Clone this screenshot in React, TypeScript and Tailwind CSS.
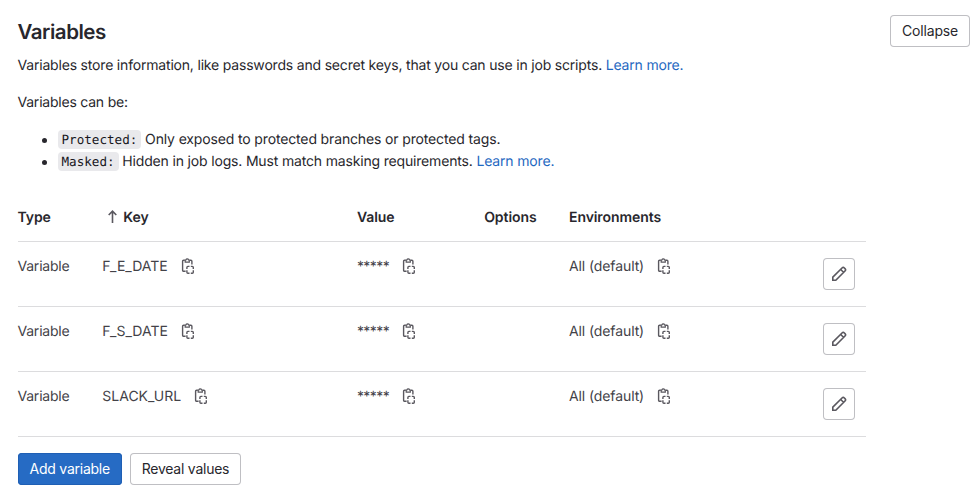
import React from "react";

const COLS = "grid grid-cols-[84.8px_254.6px_127.3px_84.8px_1fr_43px]";

const rows = [{ key: "F_E_DATE" }, { key: "F_S_DATE" }, { key: "SLACK_URL" }];

function CopyIcon() {
  return (
    <svg className="mb-[2px] ml-3 size-4 shrink-0 overflow-visible" viewBox="0 0 16 16" fill="none" stroke="#5a585f" strokeWidth="1.4">
      <path d="M5.6 13.3H3.6a1 1 0 0 1-1-1V3.3a1 1 0 0 1 1-1h1.2M9.7 2.3h1.2a1 1 0 0 1 1 1v3.2" />
      <path d="M5.2 4.2V2h.7a1.4 1.4 0 0 1 2.7 0h.7v2.2z" strokeWidth="1.2" />
      <path d="M6.9 11V9.4a1 1 0 0 1 1-1h1.6M10.8 8.4h1.5a1 1 0 0 1 1 1V11M13.3 12.3v1.9a1 1 0 0 1-1 1h-1.5M9.5 15.2H7.9a1 1 0 0 1-1-1v-1.9" />
    </svg>
  );
}

function PencilIcon() {
  return (
    <svg className="size-4" viewBox="0 0 16 16" fill="none" stroke="#5a585f" strokeWidth="1.6" strokeLinejoin="miter">
      <path d="M1.8 14.2v-3L11 2a1.7 1.7 0 0 1 2.4 0l.6.6a1.7 1.7 0 0 1 0 2.4l-9.2 9.2zM9.7 3.5l2.8 2.8" />
    </svg>
  );
}

function Button({ children, className = "" }: { children: React.ReactNode; className?: string }) {
  return (
    <button
      className={`flex h-8 items-center justify-center rounded-[4px] shadow-[inset_0_0_0_1px_#bfbfc3] ${className}`}
    >
      {children}
    </button>
  );
}

function Code({ children }: { children: React.ReactNode }) {
  return (
    <code className="rounded-[4px] bg-[#e9e9ec] px-[4px] py-[2px] font-['DejaVu_Sans_Mono',monospace] text-[12.6px] tracking-normal text-[#18171d]">
      {children}
    </code>
  );
}

function Bullet({ children }: { children: React.ReactNode }) {
  return (
    <li className="flex h-[22px] items-center">
      <span className="mr-[10.5px] size-[5px] rounded-full bg-[#28272d]" />
      <div>{children}</div>
    </li>
  );
}

export default function App() {
  return (
    <main className="h-[502px] overflow-hidden bg-white pt-[15px] pr-2 pl-[17.5px] font-['Inter',sans-serif] text-sm leading-[22px] text-[#28272d] [text-rendering:geometricPrecision]">
      <header className="flex h-8 items-start justify-between">
        <h2 className="pt-[3px] text-[20.5px] leading-7 font-semibold tracking-[-0.47px]">Variables</h2>
        <Button className="w-20 tracking-[-0.17px]">Collapse</Button>
      </header>
      <p className="mt-2 tracking-[-0.188px]">
        Variables store information, like passwords and secret keys, that you can use in job scripts.{" "}
        <a className="text-[#1f68c1]">Learn more.</a>
      </p>
      <p className="mt-[15px] tracking-[-0.22px]">Variables can be:</p>
      <ul className="mt-[15px] pl-[24.5px] tracking-[-0.145px]">
        <Bullet>
          <Code>Protected:</Code> Only exposed to protected branches or protected tags.
        </Bullet>
        <Bullet>
          <Code>Masked:</Code>
          <span className="tracking-[-0.17px]">
            {" "}Hidden in job logs. Must match masking requirements.{" "}
            <a className="text-[#1f68c1]">Learn more.</a>
          </span>
        </Bullet>
      </ul>

      <section className="mt-[33px] w-[848.5px]">
        <div className={`${COLS} h-9 border-b border-[#dcdcde] pt-px font-semibold tracking-[-0.08px]`}>
          <span>Type</span>
          <span className="flex pl-[5px]">
            <svg className="mt-[2px] mr-[3px] h-4 w-[13px]" viewBox="0 0 13 16" fill="none" stroke="#5a585f" strokeWidth="1.6">
              <path d="M5.5 14V2.3M1.7 6l3.8-3.8L9.3 6" />
            </svg>
            Key
          </span>
          <span>Value</span>
          <span>Options</span>
          <span>Environments</span>
          <span />
        </div>
        {rows.map((row) => (
          <div key={row.key} className={`${COLS} h-[65px] items-start border-b border-[#dcdcde] pt-[14px] text-[#434248]`}>
            <span className="tracking-[-0.22px]">Variable</span>
            <span className="flex items-center">{row.key}<CopyIcon /></span>
            <span className="flex items-center tracking-[-0.58px]">*****<CopyIcon /></span>
            <span />
            <span className="flex items-center tracking-[-0.1px]">All (default)<CopyIcon /></span>
            <Button className="mt-[2px] w-8"><PencilIcon /></Button>
          </div>
        ))}
      </section>

      <footer className="mt-4 flex gap-2">
        <button className="flex h-8 w-[104.5px] items-center justify-center rounded-[4px] bg-[#266bc4] tracking-[-0.24px] text-white shadow-[inset_0_0_0_1px_#1f5fb4]">
          Add variable
        </button>
        <Button className="w-[111px] tracking-[-0.24px]">Reveal values</Button>
      </footer>
    </main>
  );
}
